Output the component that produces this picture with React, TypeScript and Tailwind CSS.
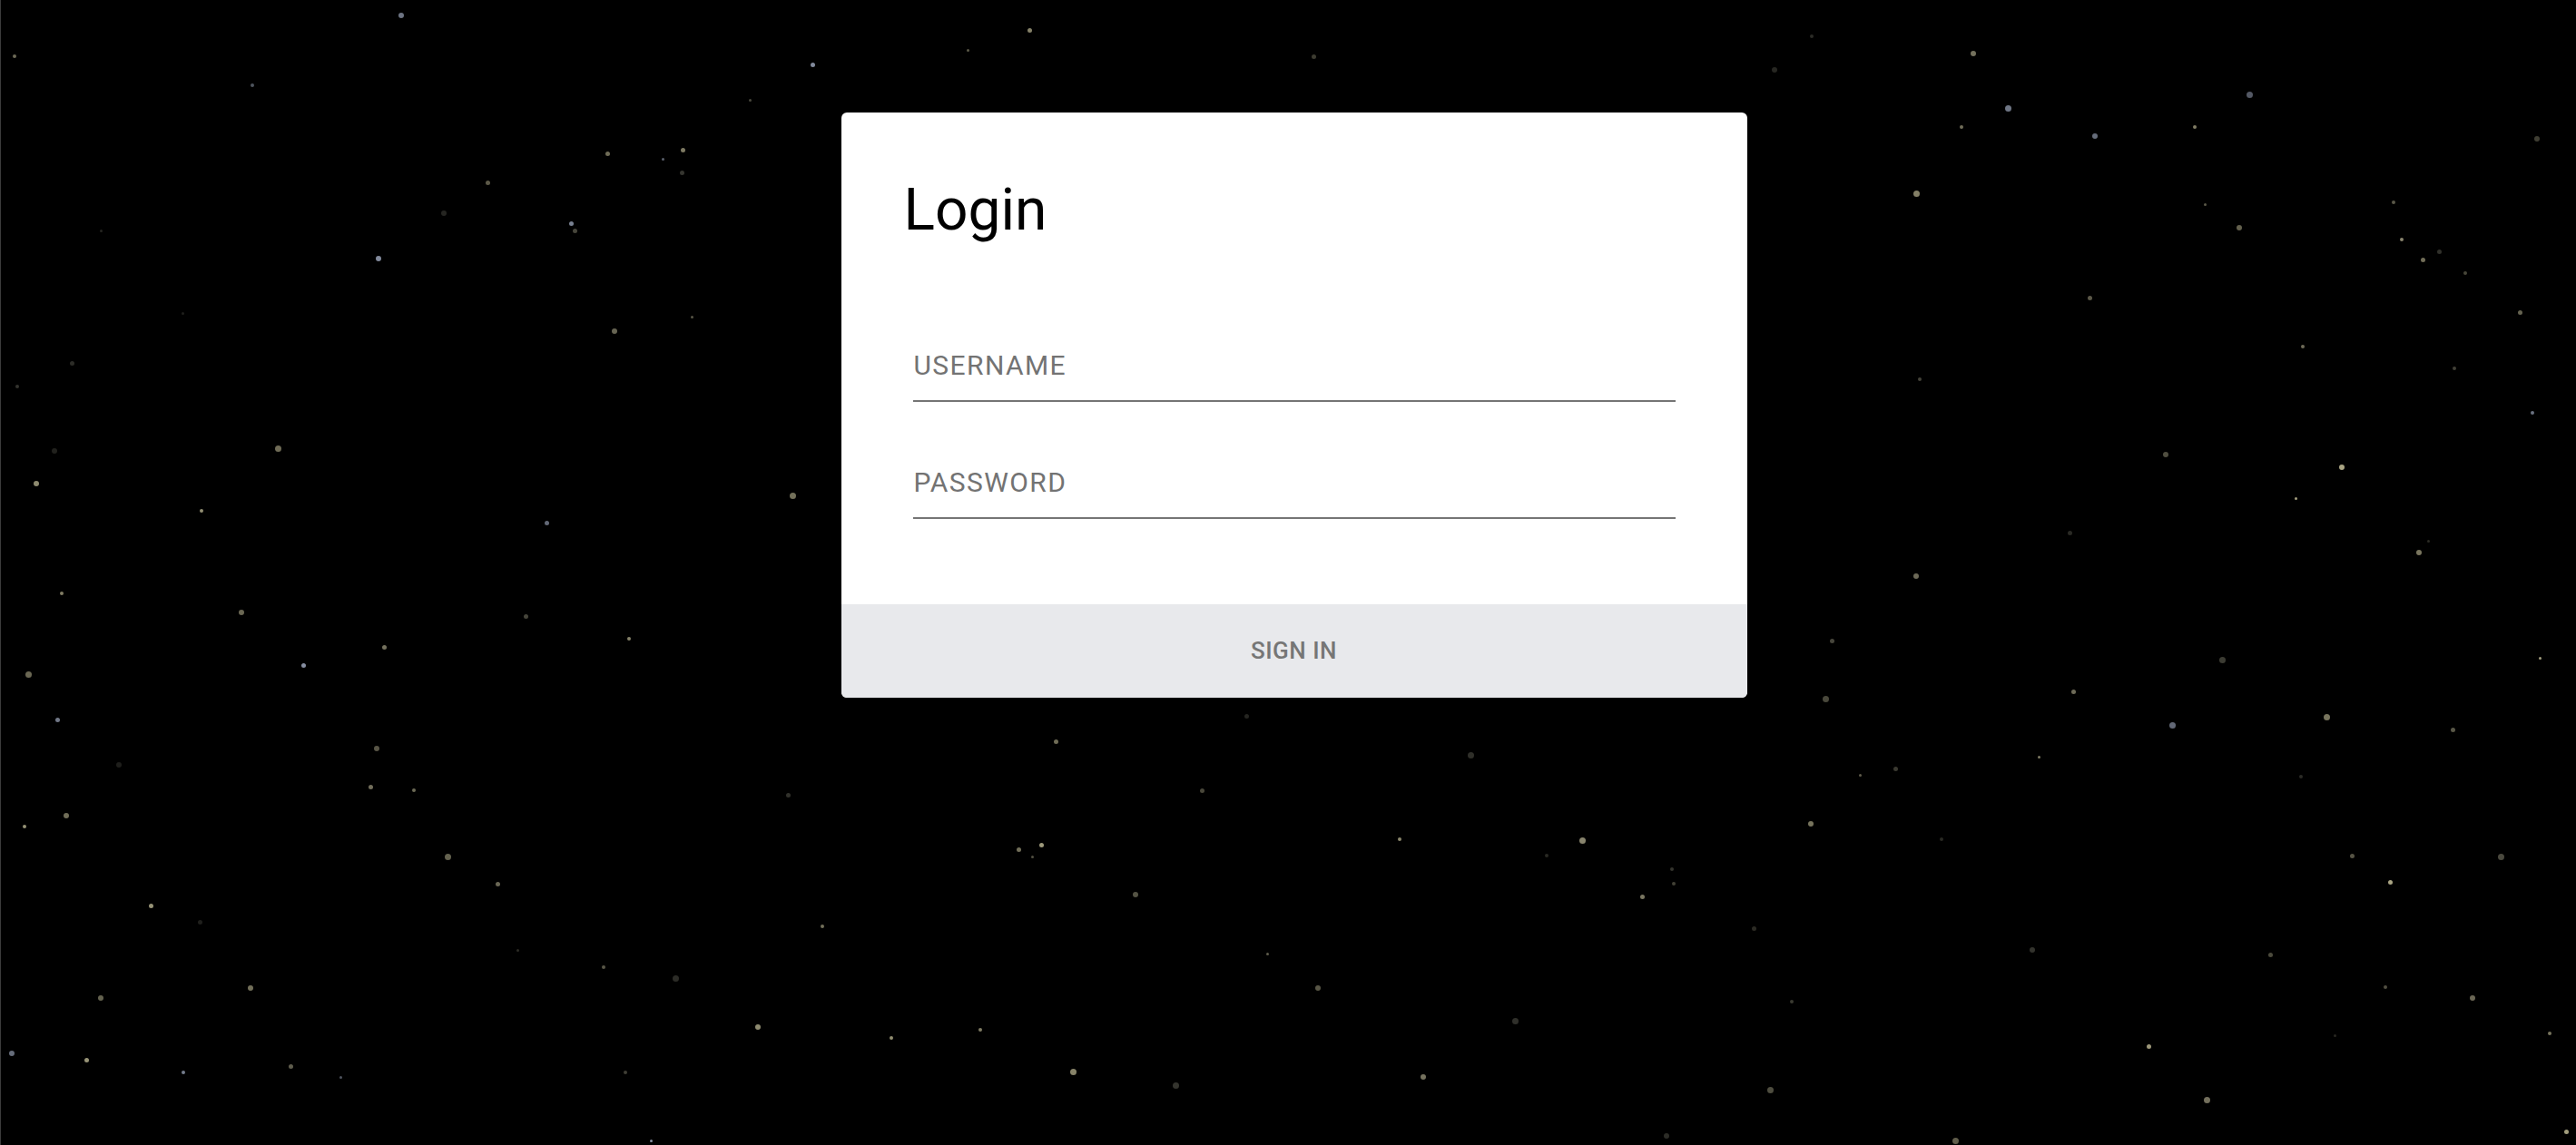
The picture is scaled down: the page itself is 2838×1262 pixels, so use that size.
import { useState } from "react";

// star positions, taken from a 1568px wide view of the page
const STARS: [number, number][] = [
  [7, 33], [242, 8], [625, 17], [798, 33], [1101, 21], [1199, 31], [1078, 41], [493, 38],
  [368, 92], [414, 90], [402, 96], [413, 104], [346, 135], [348, 139], [228, 156], [152, 51],
  [42, 220], [9, 234], [167, 271], [20, 293], [31, 273], [372, 200], [420, 192], [268, 128],
  [1220, 64], [1192, 76], [1273, 81], [1334, 76], [1367, 56], [1455, 122], [1460, 145],
  [1473, 157], [1499, 165], [1483, 152], [1532, 189], [1341, 124], [1361, 137], [1164, 116],
  [1167, 230], [1492, 223], [1542, 83], [1316, 275], [1423, 283], [1396, 303], [1258, 323],
  [1470, 335], [1164, 349], [1477, 329], [1113, 389], [1109, 424], [1414, 435], [1491, 443],
  [1399, 472], [1152, 467], [1131, 471], [961, 510], [1016, 528], [1017, 537], [998, 545],
  [1066, 564], [1453, 536], [1089, 609], [1075, 662], [1341, 668], [1550, 628], [1503, 606],
  [1420, 630], [893, 458], [757, 435], [641, 450], [478, 483], [632, 513], [618, 516],
  [627, 521], [689, 543], [499, 563], [541, 631], [459, 624], [409, 594], [366, 588],
  [314, 578], [301, 537], [224, 478], [227, 454], [145, 371], [183, 404], [232, 393],
  [381, 388], [318, 374], [331, 317], [121, 310], [36, 360], [15, 409], [33, 437], [70, 464],
  [38, 495], [13, 502], [59, 606], [51, 644], [110, 652], [175, 648], [206, 655], [379, 652],
  [713, 659], [595, 626], [651, 651], [864, 654], [1012, 690], [395, 694], [1235, 577],
  [1188, 693], [1306, 636], [1560, 688], [1100, 500], [1430, 520], [1520, 520], [1350, 400],
  [770, 580], [800, 600], [920, 620], [850, 510], [250, 480], [270, 520], [120, 560],
  [150, 600], [90, 550], [5, 640], [730, 480], [940, 520], [1180, 510], [1240, 460],
  [1260, 420], [1320, 440], [1380, 580], [1450, 600], [588, 30], [455, 60], [295, 110],
  [1270, 180], [1400, 210], [1540, 250], [60, 140], [110, 190], [480, 300], [1545, 400],
];

const COLORS = ["#aaa584", "#8c8870", "#6b6956", "#4a493e", "#8a93a6", "#9e9a7c", "#35352f"];

function rand(i: number) {
  const x = Math.sin(i * 12.9898 + 78.233) * 43758.5453;
  return x - Math.floor(x);
}

function Stars() {
  return (
    <>
      {STARS.map(([x, y], i) => {
        const size = 3 + Math.round(rand(i) * 4);
        const color = COLORS[Math.floor(rand(i + 99) * COLORS.length)];
        return (
          <span
            key={i}
            className="absolute rounded-full"
            style={{
              left: x * 1.81,
              top: y * 1.81,
              width: size,
              height: size,
              background: color,
              opacity: 0.55 + rand(i + 7) * 0.45,
            }}
          />
        );
      })}
    </>
  );
}

export default function App() {
  const [username, setUsername] = useState("");
  const [password, setPassword] = useState("");

  return (
    <div
      className="relative min-h-screen w-full overflow-hidden bg-black border-l border-[#3c3c3c]"
      style={{ fontFamily: "Roboto, 'Noto Sans', sans-serif" }}
    >
      <Stars />

      <div className="relative flex justify-center pl-3 pt-[124px]">
        {/* Card */}
        <div className="w-[998px] h-[645px] bg-white rounded-md overflow-hidden flex flex-col">
          <h1 className="pl-[69px] pt-[76px] text-[64px] leading-[64px] font-normal text-black">
            Login
          </h1>

          <div className="flex flex-col gap-[49px] px-[79px] mt-[99px]">
            <input
              value={username}
              onChange={(e) => setUsername(e.target.value)}
              placeholder="USERNAME"
              className="w-full h-[80px] pl-[1px] bg-transparent border-b-2 border-[#757575] text-[30px] tracking-[1.4px] text-[#333] placeholder:text-[#737373] outline-none"
            />
            <input
              type="password"
              value={password}
              onChange={(e) => setPassword(e.target.value)}
              placeholder="PASSWORD"
              className="w-full h-[80px] pl-[1px] bg-transparent border-b-2 border-[#757575] text-[30px] tracking-[1.4px] text-[#333] placeholder:text-[#737373] outline-none"
            />
          </div>

          <div className="flex-1" />

          <button className="h-[103px] w-full bg-[#e8e9ec] text-[26px] font-medium text-[#767676] tracking-[0.5px]">
            SIGN IN
          </button>
        </div>
      </div>
    </div>
  );
}
